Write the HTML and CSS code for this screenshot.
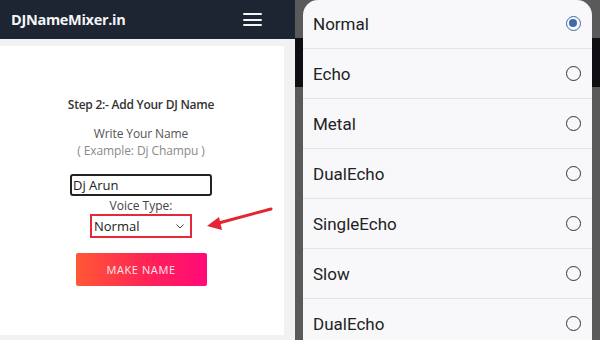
FILE: index.html
```html
<!DOCTYPE html>
<html>
<head>
<meta charset="utf-8">
<link rel="stylesheet" href="styles.css">
</head>
<body>
<div class="shot">
  <section class="site">
    <header class="nav">
      <span class="logo">DJNameMixer.in</span>
      <span class="burger"><i></i><i></i><i></i></span>
    </header>
    <div class="page">
      <div class="card">
        <h2 class="step">Step 2:- Add Your DJ Name</h2>
        <p class="write">Write Your Name</p>
        <p class="example">( Example: Dj Champu )</p>
        <div class="input">Dj Arun</div>
        <p class="voice">Voice Type:</p>
        <div class="select"><span>Normal</span>
          <svg class="chev" width="8" height="5" viewBox="0 0 8 5"><path d="M0.5 0.5 L4 4 L7.5 0.5" fill="none" stroke="#444" stroke-width="1"/></svg>
        </div>
        <div class="btn">MAKE NAME</div>
      </div>
      <svg class="arrow" width="70" height="30" viewBox="0 0 70 30"><line x1="66" y1="3" x2="10" y2="18" stroke="#e3262f" stroke-width="3" stroke-linecap="round"/><path d="M2 20 L14 11 L17 24 Z" fill="#e3262f"/></svg>
    </div>
  </section>
  <section class="phone">
    <div class="dialog">
      <div class="row"><span>Normal</span><span class="radio on"></span></div>
      <div class="row"><span>Echo</span><span class="radio"></span></div>
      <div class="row"><span>Metal</span><span class="radio"></span></div>
      <div class="row"><span>DualEcho</span><span class="radio"></span></div>
      <div class="row"><span>SingleEcho</span><span class="radio"></span></div>
      <div class="row"><span>Slow</span><span class="radio"></span></div>
      <div class="row"><span>DualEcho</span><span class="radio"></span></div>
    </div>
  </section>
</div>
</body>
</html>
```

FILE: styles.css
```css
* { box-sizing: border-box; margin: 0; padding: 0; }
html, body { width: 600px; height: 340px; overflow: hidden; }
body { background: #5a5a5a; }
.shot { display: flex; width: 600px; height: 340px; }
.site { width: 295px; height: 340px; background: #f2f2f2; display: flex; flex-direction: column; position: relative; font-family: "Open Sans", "Liberation Sans", sans-serif; }
.nav { height: 39px; background: #1d2432; display: flex; align-items: center; justify-content: space-between; padding: 0 33px 0 11px; }
.logo { color: #f4f5f7; font-weight: 700; font-size: 14.5px; letter-spacing: -0.3px; }
.burger { display: flex; flex-direction: column; gap: 3.5px; width: 19px; }
.burger i { display: block; height: 2px; background: #f4f5f7; border-radius: 1px; }
.page { flex: 1; padding: 7px 11px 5px 0; position: relative; }
.card { height: 100%; background: #fff; display: flex; flex-direction: column; align-items: center; padding-top: 50px; padding-right: 2px; }
.step { font-size: 12px; font-weight: 600; color: #333; letter-spacing: -0.25px; }
.write { margin-top: 12px; font-size: 12px; color: #555; letter-spacing: -0.1px; }
.example { margin-top: 0; font-size: 12px; color: #8a8a8a; letter-spacing: -0.1px; }
.input { margin-top: 15px; width: 142px; height: 22px; border: 2px solid #222; border-radius: 3px; font-size: 13px; color: #222; padding-left: 1px; line-height: 18px; }
.voice { margin-top: 2px; font-size: 12px; color: #444; line-height: 16px; }
.select { margin-top: 0; width: 102px; height: 24px; border: 2px solid #e5283a; display: flex; align-items: center; justify-content: space-between; padding: 0 6px 0 2px; font-size: 13px; color: #222; }
.chev { margin-top: 1px; }
.btn { margin-top: 15px; width: 131px; height: 33px; border-radius: 2px; background: linear-gradient(90deg, #ff5835, #ff2256 55%, #ff0a78); color: #fde6ec; font-size: 11px; letter-spacing: 0.6px; display: flex; align-items: center; justify-content: center; }
.arrow { position: absolute; left: 205px; top: 167px; }
.phone { flex: 1; height: 340px; padding: 0 8px; background: linear-gradient(to bottom, #5a5a5a 0, #5a5a5a 38px, #0d0f13 38px, #0d0f13 87px, #5a5a5a 87px); }
.dialog { height: 100%; background: #f8f8fb; border-radius: 15px 15px 0 0; font-family: Roboto, "Noto Sans", sans-serif; overflow: hidden; }
.row { height: 50px; display: flex; align-items: center; justify-content: space-between; padding: 0 11px 0 10px; border-top: 1px solid #e2e2e8; font-size: 17px; color: #222; }
.row:first-child { border-top: none; height: 48px; padding-bottom: 1px; }
.radio { width: 15px; height: 15px; border: 1.5px solid #333; border-radius: 50%; position: relative; }
.radio.on { border-color: #3f6aa8; }
.radio.on::after { content: ""; position: absolute; left: 2px; top: 2px; width: 8px; height: 8px; border-radius: 50%; background: #3f6aa8; }
```
